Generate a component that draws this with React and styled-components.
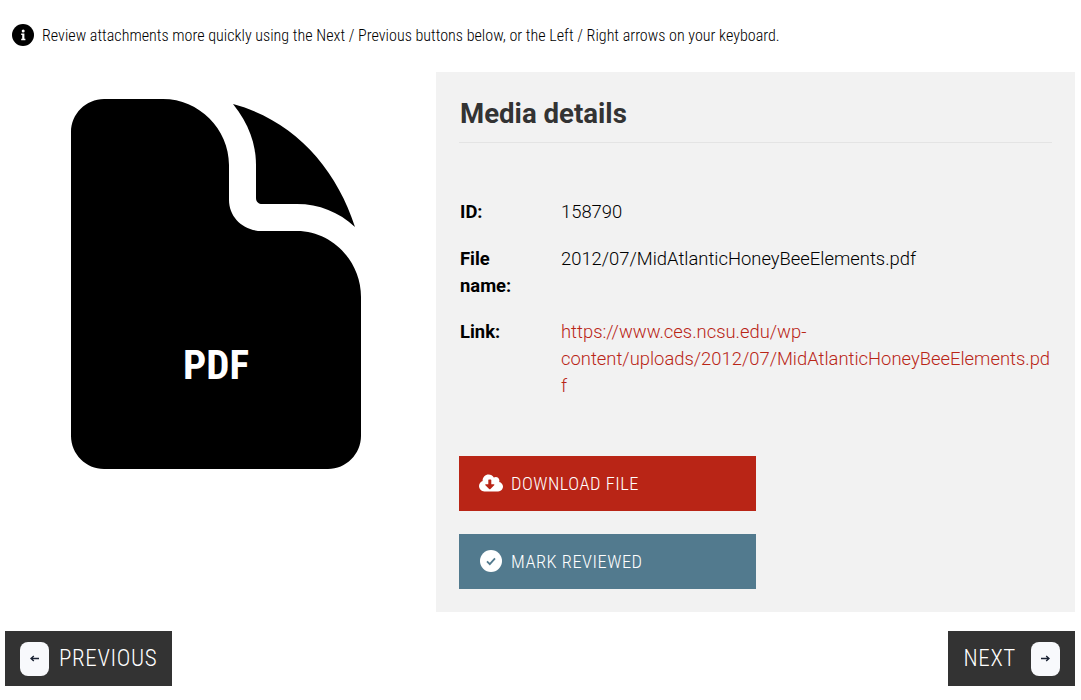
import React from "react";
import styled, { createGlobalStyle } from "styled-components";
import { FaCloudDownloadAlt } from "react-icons/fa";

const GlobalStyle = createGlobalStyle`
  html, body {
    margin: 0;
    padding: 0;
    background: #fff;
    overflow: hidden;
  }
  body {
    font-family: Roboto, "Liberation Sans", sans-serif;
    color: #000;
  }
`;

const Page = styled.div`
  width: 1070px;
  height: 700px;
  padding-left: 5px;
`;

const Notice = styled.div`
  display: flex;
  align-items: center;
  gap: 8px;
  height: 72px;
  padding: 0 0 2px 7px;
  box-sizing: border-box;
  font-size: 16.1px;
  font-weight: 300;
  font-stretch: 75%;
  svg {
    width: 22px;
    height: 22px;
  }
`;

const Main = styled.div`
  display: grid;
  grid-template-columns: 431px 639px;
  grid-template-rows: 540px;
`;

const Preview = styled.div`
  padding: 27px 0 0 66px;
`;

const FileIconWrap = styled.div`
  position: relative;
  width: 290px;
  height: 370px;
  svg {
    display: block;
  }
`;

const FileType = styled.span`
  position: absolute;
  left: 0;
  right: 0;
  top: 240px;
  text-align: center;
  color: #fff;
  font-size: 41px;
  line-height: 52px;
  font-weight: 700;
  font-stretch: 75%;
`;

const Panel = styled.section`
  background: #f2f2f2;
  padding: 23px;
  box-sizing: border-box;
`;

const Heading = styled.h2`
  margin: 0 0 55px;
  padding: 1px 0 10px 1px;
  border-bottom: 1px solid #e4e4e4;
  font-size: 27.6px;
  line-height: 36px;
  font-weight: 700;
  color: #333;
`;

const Details = styled.dl`
  display: grid;
  grid-template-columns: 102px 491px;
  row-gap: 19.6px;
  margin: 0 0 56.8px;
  font-size: 18.4px;
  line-height: 27px;
`;

const Label = styled.dt`
  font-weight: 700;
  width: 60px;
  padding-left: 1px;
`;

const Value = styled.dd`
  margin: 0;
  font-weight: 300;
  overflow-wrap: anywhere;
`;

const FileLink = styled.a`
  color: #b92516;
  text-decoration: none;
`;

const ActionButton = styled.button`
  display: flex;
  align-items: center;
  gap: 8px;
  width: 297px;
  height: 55px;
  margin-bottom: 23px;
  padding: 0 0 0 20px;
  border: 0;
  background: ${(p) => p.$bg};
  color: #fff;
  font-family: inherit;
  font-size: 18.4px;
  font-weight: 300;
  font-stretch: 75%;
  letter-spacing: 0.5px;
  svg {
    width: 24px;
    height: 24px;
  }
`;

const Footer = styled.div`
  display: flex;
  justify-content: space-between;
  margin-top: 19px;
`;

const NavButton = styled.button`
  display: flex;
  align-items: center;
  gap: ${(p) => p.$gap}px;
  height: 55px;
  padding: 0 15px;
  border: 0;
  background: #333;
  color: #fff;
  font-family: inherit;
  font-size: 23px;
  font-weight: 300;
  font-stretch: 75%;
  letter-spacing: 0.65px;
`;

const KeyCap = styled.span`
  display: flex;
  align-items: center;
  justify-content: center;
  width: 29px;
  height: 34px;
  border-radius: 8px;
  background: #f8f9fc;
  color: #1a2233;
  svg {
    width: 9px;
    height: 7px;
  }
`;

const Arrow = ({ flip }) => (
  <svg viewBox="0 0 9 7" style={flip ? { transform: "scaleX(-1)" } : undefined}>
    <path d="M9 3.5H1.5M3.8 1 1 3.5 3.8 6" fill="none" stroke="currentColor" strokeWidth="1.4" />
  </svg>
);

const InfoIcon = () => (
  <svg viewBox="0 0 22 22">
    <circle cx="11" cy="11" r="11" />
    <circle cx="11.2" cy="6.9" r="1.5" fill="#fff" />
    <path d="M9.2 9.6h3.2v5.2h1v1.4H9.2v-1.4h1v-3.8h-1z" fill="#fff" />
  </svg>
);

const CheckIcon = () => (
  <svg viewBox="0 0 24 24">
    <circle cx="12" cy="12" r="11" fill="#fff" />
    <path d="M8 12.4l2.8 2.8L16 9.4" fill="none" stroke="#527a8e" strokeWidth="1.8" />
  </svg>
);

const FileIcon = () => (
  <svg width="290" height="370" viewBox="0 0 290 370">
    <path d="M33 0H92C128 0 158 30 158 66V101C158 118 172 132 191 132H226C261 132 290 162 290 198V337C290 355 275 370 257 370H33C15 370 0 355 0 337V33C0 15 15 0 33 0Z" />
    <path d="M162 5C178 25 185 45 185 66V99C185 103 188 105 191 105H226C248 105 268 113 284 128C265 68 222 21 162 5Z" />
  </svg>
);

export default function App() {
  return (
    <Page>
      <GlobalStyle />
      <Notice>
        <InfoIcon />
        <span>Review attachments more quickly using the Next / Previous buttons below, or the Left / Right arrows on your keyboard.</span>
      </Notice>
      <Main>
        <Preview>
          <FileIconWrap>
            <FileIcon />
            <FileType>PDF</FileType>
          </FileIconWrap>
        </Preview>
        <Panel>
          <Heading>Media details</Heading>
          <Details>
            <Label>ID:</Label>
            <Value>158790</Value>
            <Label>File name:</Label>
            <Value>2012/07/MidAtlanticHoneyBeeElements.pdf</Value>
            <Label>Link:</Label>
            <Value>
              <FileLink href="#">https://www.ces.ncsu.edu/wp-content/uploads/2012/07/MidAtlanticHoneyBeeElements.pdf</FileLink>
            </Value>
          </Details>
          <ActionButton $bg="#b92516">
            <FaCloudDownloadAlt />
            DOWNLOAD FILE
          </ActionButton>
          <ActionButton $bg="#527a8e">
            <CheckIcon />
            MARK REVIEWED
          </ActionButton>
        </Panel>
      </Main>
      <Footer>
        <NavButton $gap={10}>
          <KeyCap><Arrow /></KeyCap>
          PREVIOUS
        </NavButton>
        <NavButton $gap={15}>
          NEXT
          <KeyCap><Arrow flip /></KeyCap>
        </NavButton>
      </Footer>
    </Page>
  );
}
